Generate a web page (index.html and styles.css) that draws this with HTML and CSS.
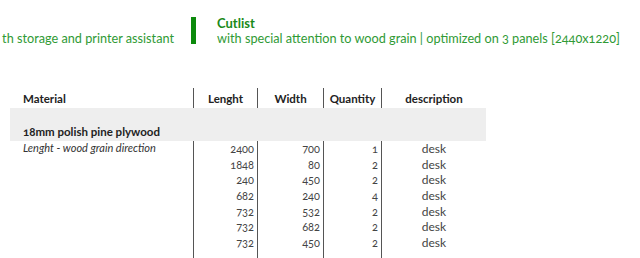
FILE: index.html
```html
<!DOCTYPE html>
<html>
<head>
<meta charset="utf-8">
<link rel="stylesheet" href="styles.css">
</head>
<body>
<header class="top">
  <div class="top-left">th storage and printer assistant</div>
  <div class="top-bar"></div>
  <div class="top-right">
    <div class="title">Cutlist</div>
    <div class="subtitle">with special attention to wood grain | optimized on 3 panels [2440x1220]</div>
  </div>
</header>
<table class="cut">
  <thead>
    <tr>
      <th class="c-mat">Material</th>
      <th class="c-len">Lenght</th>
      <th class="c-wid">Width</th>
      <th class="c-qty">Quantity</th>
      <th class="c-desc">description</th>
    </tr>
  </thead>
  <tbody>
    <tr class="group"><td colspan="5">18mm polish pine plywood</td></tr>
    <tr><td class="c-mat note">Lenght - wood grain direction</td><td class="num">2400</td><td class="num">700</td><td class="num">1</td><td class="desc">desk</td></tr>
    <tr><td class="c-mat"></td><td class="num">1848</td><td class="num">80</td><td class="num">2</td><td class="desc">desk</td></tr>
    <tr><td class="c-mat"></td><td class="num">240</td><td class="num">450</td><td class="num">2</td><td class="desc">desk</td></tr>
    <tr><td class="c-mat"></td><td class="num">682</td><td class="num">240</td><td class="num">4</td><td class="desc">desk</td></tr>
    <tr><td class="c-mat"></td><td class="num">732</td><td class="num">532</td><td class="num">2</td><td class="desc">desk</td></tr>
    <tr><td class="c-mat"></td><td class="num">732</td><td class="num">682</td><td class="num">2</td><td class="desc">desk</td></tr>
    <tr><td class="c-mat"></td><td class="num">732</td><td class="num">450</td><td class="num">2</td><td class="desc">desk</td></tr>
    <tr class="filler"><td class="c-mat"></td><td class="num"></td><td class="num"></td><td class="num"></td><td class="desc"></td></tr>
  </tbody>
</table>
</body>
</html>
```
FILE: styles.css
```css
html, body {
  margin: 0;
  padding: 0;
  background: #fff;
  overflow: hidden;
}
body {
  font-family: Lato, "Open Sans", sans-serif;
  font-variant-numeric: oldstyle-nums;
}
.top {
  display: flex;
  align-items: flex-end;
  padding-top: 16px;
  height: 30px;
}
.top-left {
  width: 174px;
  display: flex;
  justify-content: flex-end;
  font-size: 12.7px;
  color: #2f9a35;
  white-space: nowrap;
  line-height: 16px;
}
.top-bar {
  width: 5px;
  height: 27px;
  background: #0c8a0c;
  margin-left: 17px;
  align-self: flex-start;
  margin-top: 1px;
}
.top-right {
  margin-left: 21px;
  display: flex;
  flex-direction: column;
}
.title {
  font-size: 13px;
  font-weight: bold;
  color: #1a8a1a;
  line-height: 14px;
}
.subtitle {
  font-size: 12.7px;
  color: #2f9a35;
  line-height: 16px;
  white-space: nowrap;
}
.cut {
  margin-top: 42px;
  margin-left: 10px;
  border-collapse: collapse;
  font-size: 11px;
  color: #222;
  table-layout: fixed;
  width: 476px;
}
.cut th {
  font-weight: bold;
  font-size: 11.5px;
  height: 20px;
  padding: 0;
  text-align: center;
  vertical-align: middle;
}
.cut th.c-mat {
  text-align: left;
  padding-left: 13px;
  width: 170px;
}
.cut .c-len { width: 63px; }
.cut .c-wid { width: 65px; }
.cut .c-qty { width: 57px; }
.cut th.c-mat, .cut th.c-len, .cut th.c-wid, .cut th.c-qty {
  border-right: 1px solid #555;
}
.cut td {
  height: 15.7px;
  padding: 0;
  line-height: 14px;
}
.cut .group td {
  background: #eeeeee;
  height: 31px;
  padding: 0 0 2px 13px;
  vertical-align: bottom;
  font-weight: bold;
  font-size: 11.5px;
  color: #222;
}
.cut td.c-mat {
  border-right: 1px solid #555;
  padding-left: 13px;
}
.cut td.note {
  font-style: italic;
  color: #333;
  font-weight: 400;
  vertical-align: top;
}
.cut td.num {
  text-align: right;
  padding-right: 3px;
  border-right: 1px solid #555;
  color: #444;
}
.cut td.desc {
  text-align: center;
  font-size: 12px;
  color: #444;
}
.cut .filler td {
  height: 12px;
}
```
